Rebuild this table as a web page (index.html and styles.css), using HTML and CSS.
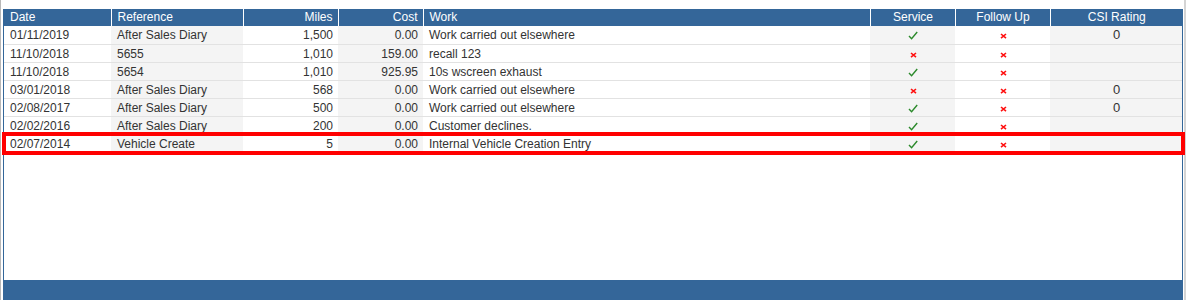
FILE: index.html
```html
<!DOCTYPE html>
<html>
<head>
<meta charset="utf-8">
<link rel="stylesheet" href="styles.css">
</head>
<body>
<div class="frame">
  <div class="panel">
    <div class="grid-wrap">
      <table class="grid">
        <colgroup>
          <col class="c-date"><col class="c-ref"><col class="c-miles"><col class="c-cost"><col class="c-work"><col class="c-svc"><col class="c-fu"><col class="c-csi">
        </colgroup>
        <thead>
          <tr>
            <th class="l">Date</th>
            <th class="l">Reference</th>
            <th class="r">Miles</th>
            <th class="r">Cost</th>
            <th class="l">Work</th>
            <th class="c">Service</th>
            <th class="c">Follow Up</th>
            <th class="c">CSI Rating</th>
          </tr>
        </thead>
        <tbody>
          <tr>
            <td class="l">01/11/2019</td><td class="l alt">After Sales Diary</td><td class="r">1,500</td><td class="r alt">0.00</td><td class="l">Work carried out elsewhere</td>
            <td class="c alt"><svg class="tick" viewBox="0 0 10 9"><path d="M1 5 L3.6 7.8 L9.2 1"/></svg></td>
            <td class="c"><svg class="cross" viewBox="0 0 7 6"><path d="M1 1 L6 5.2 M6 1 L1 5.2"/></svg></td>
            <td class="c alt csi">0</td>
          </tr>
          <tr>
            <td class="l">11/10/2018</td><td class="l alt">5655</td><td class="r">1,010</td><td class="r alt">159.00</td><td class="l">recall 123</td>
            <td class="c alt"><svg class="cross" viewBox="0 0 7 6"><path d="M1 1 L6 5.2 M6 1 L1 5.2"/></svg></td>
            <td class="c"><svg class="cross" viewBox="0 0 7 6"><path d="M1 1 L6 5.2 M6 1 L1 5.2"/></svg></td>
            <td class="c alt csi"></td>
          </tr>
          <tr>
            <td class="l">11/10/2018</td><td class="l alt">5654</td><td class="r">1,010</td><td class="r alt">925.95</td><td class="l">10s wscreen exhaust</td>
            <td class="c alt"><svg class="tick" viewBox="0 0 10 9"><path d="M1 5 L3.6 7.8 L9.2 1"/></svg></td>
            <td class="c"><svg class="cross" viewBox="0 0 7 6"><path d="M1 1 L6 5.2 M6 1 L1 5.2"/></svg></td>
            <td class="c alt csi"></td>
          </tr>
          <tr>
            <td class="l">03/01/2018</td><td class="l alt">After Sales Diary</td><td class="r">568</td><td class="r alt">0.00</td><td class="l">Work carried out elsewhere</td>
            <td class="c alt"><svg class="cross" viewBox="0 0 7 6"><path d="M1 1 L6 5.2 M6 1 L1 5.2"/></svg></td>
            <td class="c"><svg class="cross" viewBox="0 0 7 6"><path d="M1 1 L6 5.2 M6 1 L1 5.2"/></svg></td>
            <td class="c alt csi">0</td>
          </tr>
          <tr>
            <td class="l">02/08/2017</td><td class="l alt">After Sales Diary</td><td class="r">500</td><td class="r alt">0.00</td><td class="l">Work carried out elsewhere</td>
            <td class="c alt"><svg class="tick" viewBox="0 0 10 9"><path d="M1 5 L3.6 7.8 L9.2 1"/></svg></td>
            <td class="c"><svg class="cross" viewBox="0 0 7 6"><path d="M1 1 L6 5.2 M6 1 L1 5.2"/></svg></td>
            <td class="c alt csi">0</td>
          </tr>
          <tr>
            <td class="l">02/02/2016</td><td class="l alt">After Sales Diary</td><td class="r">200</td><td class="r alt">0.00</td><td class="l">Customer declines.</td>
            <td class="c alt"><svg class="tick" viewBox="0 0 10 9"><path d="M1 5 L3.6 7.8 L9.2 1"/></svg></td>
            <td class="c"><svg class="cross" viewBox="0 0 7 6"><path d="M1 1 L6 5.2 M6 1 L1 5.2"/></svg></td>
            <td class="c alt csi"></td>
          </tr>
          <tr>
            <td class="l">02/07/2014</td><td class="l alt">Vehicle Create</td><td class="r">5</td><td class="r alt">0.00</td><td class="l">Internal Vehicle Creation Entry</td>
            <td class="c alt"><svg class="tick" viewBox="0 0 10 9"><path d="M1 5 L3.6 7.8 L9.2 1"/></svg></td>
            <td class="c"><svg class="cross" viewBox="0 0 7 6"><path d="M1 1 L6 5.2 M6 1 L1 5.2"/></svg></td>
            <td class="c alt csi"></td>
          </tr>
        </tbody>
      </table>
      <div class="highlight"></div>
    </div>
    <div class="footer"></div>
  </div>
</div>
</body>
</html>
```
FILE: styles.css
```css
html, body {
  margin: 0;
  padding: 0;
  background: #ffffff;
}
body {
  font-family: "Liberation Sans", Arial, sans-serif;
  font-size: 12px;
  color: #333333;
}
.frame {
  height: 300px;
  box-sizing: border-box;
  border-left: 1px solid #b8b8b8;
  border-right: 2px solid #d4d4d4;
  padding: 9px 1px 0 2px;
  display: flex;
  flex-direction: column;
}
.panel {
  flex: 1;
  display: flex;
  flex-direction: column;
  border-left: 1px solid #336699;
  border-right: 1px solid #336699;
}
.grid-wrap {
  flex: 1;
  position: relative;
}
.grid {
  width: 100%;
  border-collapse: collapse;
  table-layout: fixed;
}
.c-date { width: 107px; }
.c-ref { width: 132px; }
.c-miles { width: 95px; }
.c-cost { width: 85px; }
.c-work { width: 447px; }
.c-svc { width: 85px; }
.c-fu { width: 95px; }
.c-csi { width: 132px; }
th {
  background: #346699;
  color: #ffffff;
  font-weight: normal;
  height: 17px;
  padding: 0 5px 0 6px;
  border-left: 1px solid #ffffff;
  box-sizing: border-box;
  white-space: nowrap;
  line-height: 17px;
}
th:first-child { border-left: none; }
td {
  height: 18px;
  box-sizing: border-box;
  padding: 1px 5px 0 6px;
  border-bottom: 1px solid #e2e2e2;
  line-height: 16px;
  white-space: nowrap;
  overflow: hidden;
  vertical-align: middle;
}
td.alt { background: #f4f4f4; }
.l { text-align: left; }
.r { text-align: right; }
.c { text-align: center; }
.csi { font-size: 13px; }
.tick {
  width: 10px;
  height: 9px;
  display: inline-block;
  vertical-align: -1px;
}
.tick path {
  fill: none;
  stroke: #2c8a2c;
  stroke-width: 1.4;
}
.cross {
  width: 7px;
  height: 6px;
  display: inline-block;
  vertical-align: 0;
}
.cross path {
  fill: none;
  stroke: #ff1010;
  stroke-width: 1.6;
}
.highlight {
  position: absolute;
  left: -2px;
  right: -3px;
  top: 123px;
  height: 23px;
  box-sizing: border-box;
  border: 4px solid #ff0000;
  pointer-events: none;
}
.footer {
  height: 20px;
  background: #346699;
  margin: 0 -1px;
}
```
